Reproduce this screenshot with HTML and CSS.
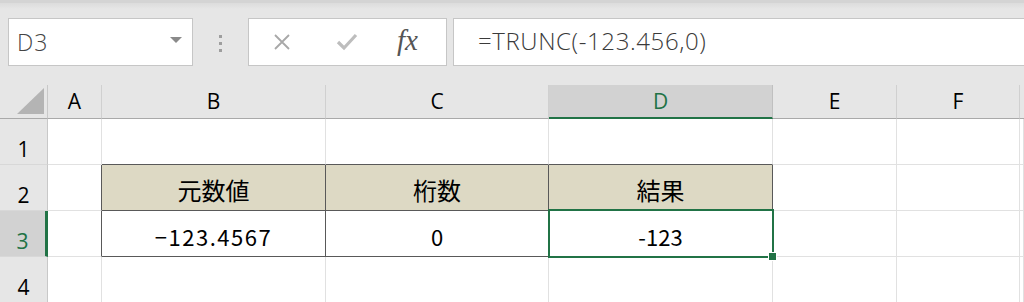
FILE: index.html
```html
<!DOCTYPE html>
<html lang="ja">
<head>
    <meta charset="UTF-8">
    <title>TRUNC</title>
    <link rel="stylesheet" href="styles.css">
</head>
<body>
    <div class="toolbar">
        <div class="name-box">
            <span class="name-text">D3</span>
            <span class="name-arrow"></span>
        </div>
        <div class="grip"><span></span><span></span><span></span></div>
        <div class="fx-buttons">
            <svg class="fx-icon" width="20" height="20" viewBox="0 0 20 20">
                <path d="M3 3 L17 17 M17 3 L3 17" stroke="#a8a8a8" stroke-width="1.8" fill="none"/>
            </svg>
            <svg class="fx-icon" width="22" height="20" viewBox="0 0 22 20">
                <path d="M2 10 L8 16 L20 3" stroke="#bdbdbd" stroke-width="3.2" fill="none"/>
            </svg>
            <span class="fx-label">fx</span>
        </div>
        <div class="formula">=TRUNC(-123.456,0)</div>
    </div>

    <div class="sheet">
        <div class="corner"><span class="corner-tri"></span></div>
        <div class="col-head">A</div>
        <div class="col-head">B</div>
        <div class="col-head">C</div>
        <div class="col-head active">D</div>
        <div class="col-head">E</div>
        <div class="col-head">F</div>
        <div class="col-head last"></div>

        <div class="row-head">1</div>
        <div class="cell"></div>
        <div class="cell tb-top"></div>
        <div class="cell tb-top"></div>
        <div class="cell tb-top"></div>
        <div class="cell"></div>
        <div class="cell"></div>
        <div class="cell"></div>

        <div class="row-head">2</div>
        <div class="cell tb-left"></div>
        <div class="cell tb head">元数値</div>
        <div class="cell tb head">桁数</div>
        <div class="cell tb head">結果</div>
        <div class="cell"></div>
        <div class="cell"></div>
        <div class="cell"></div>

        <div class="row-head active">3</div>
        <div class="cell tb-left"></div>
        <div class="cell tb num wide">−123.4567</div>
        <div class="cell tb num">0</div>
        <div class="cell tb num selected">-123</div>
        <div class="cell"></div>
        <div class="cell"></div>
        <div class="cell"></div>

        <div class="row-head">4</div>
        <div class="cell"></div>
        <div class="cell"></div>
        <div class="cell"></div>
        <div class="cell"></div>
        <div class="cell"></div>
        <div class="cell"></div>
        <div class="cell"></div>
    </div>
</body>
</html>
```

FILE: styles.css
```css
body {
    margin: 0;
    background: #e6e6e6;
    font-family: 'Noto Sans', 'Noto Sans CJK JP', sans-serif;
    color: #000;
    overflow: hidden;
}
.toolbar {
    height: 85px;
    box-sizing: border-box;
    padding: 18px 0 0 8px;
    display: flex;
    align-items: flex-start;
    border-top: 3px solid #d4d4d4;
    background: linear-gradient(#dcdcdc 0, #e6e6e6 6px);
}
.toolbar > div {
    height: 48px;
    box-sizing: border-box;
    margin-top: -3px;
}
.name-box {
    width: 185px;
    background: #fff;
    border: 1px solid #c6c6c6;
    display: flex;
    align-items: center;
    justify-content: space-between;
    padding: 0 10px 0 8px;
}
.name-text {
    font-size: 23px;
    color: #444;
    font-family: 'Open Sans', sans-serif;
    font-weight: 300;
    letter-spacing: 1px;
}
.name-arrow {
    width: 0;
    height: 0;
    border-left: 6px solid transparent;
    border-right: 6px solid transparent;
    border-top: 6px solid #8a8a8a;
    margin-top: -4px;
}
.grip {
    width: 55px;
    display: flex;
    flex-direction: column;
    align-items: center;
    justify-content: center;
    gap: 4px;
    padding-top: 2px;
}
.grip span {
    width: 3px;
    height: 3px;
    background: #9e9e9e;
}
.fx-buttons {
    width: 199px;
    background: #fff;
    border: 1px solid #c6c6c6;
    display: flex;
    align-items: center;
    padding-left: 23px;
    gap: 44px;
}
.fx-label {
    font-family: 'Liberation Serif', serif;
    font-style: italic;
    font-size: 29px;
    color: #555;
    margin-left: -5px;
    margin-top: -4px;
}
.formula {
    flex: 1;
    margin-left: 6px;
    background: #fff;
    border: 1px solid #c6c6c6;
    border-right: none;
    font-size: 24px;
    font-weight: 300;
    letter-spacing: 0.6px;
    color: #3a3a3a;
    padding: 5px 0 0 24px;
    font-family: 'Open Sans', sans-serif;
}
.sheet {
    display: grid;
    grid-template-columns: 48px 54px 224px 223px 224px 124px 123px 4px;
    grid-template-rows: 34px 46px 46px 46px 46px;
}
.corner, .col-head, .row-head {
    background: #e6e6e6;
    font-family: 'Open Sans', sans-serif;
    font-size: 21px;
    display: flex;
    align-items: center;
    justify-content: center;
    box-sizing: border-box;
}
.corner {
    border-right: 1px solid #c8c8c8;
    border-bottom: 1px solid #a9a9a9;
    align-items: flex-end;
    justify-content: flex-end;
    padding: 0 3px 4px 0;
}
.corner-tri {
    width: 27px;
    height: 26px;
    background: #b4b4b4;
    clip-path: polygon(100% 0, 100% 100%, 0 100%);
}
.col-head {
    border-right: 1px solid #d0d0d0;
    border-bottom: 1px solid #a9a9a9;
    padding-bottom: 1px;
}
.col-head.active {
    background: #d2d2d2;
    color: #217346;
    border-bottom: 2px solid #217346;
    border-right-color: #c0c0c0;
}
.col-head.last {
    border-right: none;
}
.row-head {
    border-right: 1px solid #c8c8c8;
    border-bottom: 1px solid #d8d8d8;
    padding-top: 14px;
}
.row-head.active {
    background: #d2d2d2;
    color: #217346;
    border-right: 3px solid #217346;
}
.cell {
    background: #fff;
    border-right: 1px solid #e1e1e1;
    border-bottom: 1px solid #e1e1e1;
    box-sizing: border-box;
    display: flex;
    align-items: center;
    justify-content: center;
    font-family: 'Noto Sans CJK JP', sans-serif;
    font-size: 22px;
}
.tb-top {
    border-bottom-color: #595959;
}
.tb-left {
    border-right-color: #595959;
}
.tb {
    border-right-color: #595959;
    border-bottom-color: #595959;
}
.head {
    background: #ddd9c4;
    font-size: 24px;
    padding-top: 4px;
}
.num {
    padding-top: 4px;
}
.wide {
    letter-spacing: 1.5px;
}
.selected {
    position: relative;
}
.selected::after {
    content: "";
    position: absolute;
    left: -1px;
    top: -2px;
    right: -2px;
    bottom: -2px;
    border: 2px solid #217346;
}
.selected::before {
    content: "";
    position: absolute;
    right: -5px;
    bottom: -5px;
    width: 7px;
    height: 7px;
    background: #217346;
    border: 1px solid #fff;
    z-index: 1;
}
```
